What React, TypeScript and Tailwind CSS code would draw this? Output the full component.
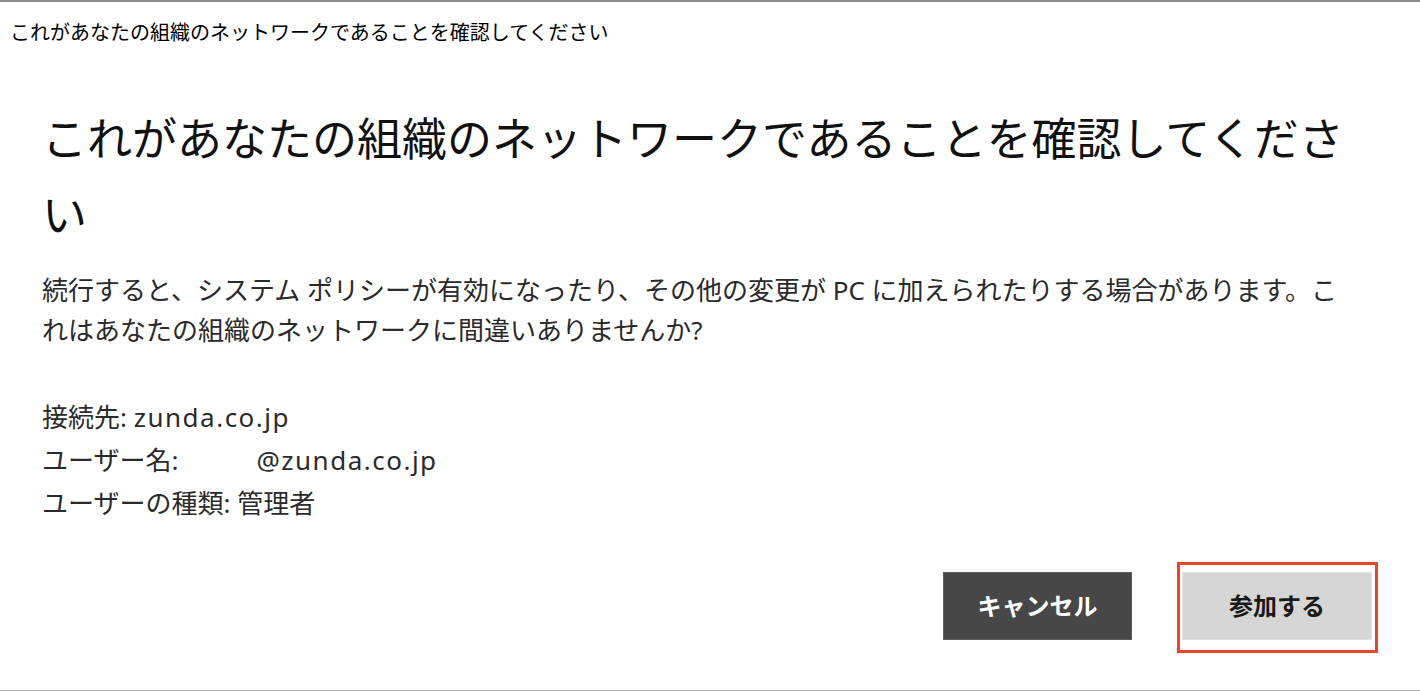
export default function App() {
  return (
    <div className="relative flex h-[691px] w-full flex-col overflow-hidden border-t-2 border-b border-t-[#8a8a8a] border-b-[#b4b4b4] bg-white font-['Noto_Sans','Noto_Sans_CJK_JP',sans-serif] text-[#1a1a1a]">
      <div className="pl-[10px] pt-[17px] text-[20px] leading-[28px] text-black">
        これがあなたの組織のネットワークであることを確認してください
      </div>

      <div className="px-[42px]">
        <h1 className="mt-[54px] text-[45px] font-normal leading-[76px] text-[#111]">
          これがあなたの組織のネットワークであることを確認してくださ
          <br />い
        </h1>

        <p className="mt-[17px] text-[26px] leading-[40px] text-[#2a2a2a]">
          続行すると、システム ポリシーが有効になったり、その他の変更が PC
          に加えられたりする場合があります。こ
          <br />
          れはあなたの組織のネットワークに間違いありませんか?
        </p>

        <div className="mt-[46px] text-[26px] leading-[43px] text-[#2a2a2a]">
          <div>
            接続先: <span className="tracking-[1.5px]">zunda.co.jp</span>
          </div>
          <div>
            ユーザー名:<span className="inline-block w-[78px]" />
            <span className="tracking-[1.5px]">@zunda.co.jp</span>
          </div>
          <div>ユーザーの種類: 管理者</div>
        </div>
      </div>

      <div className="mt-[47px] flex justify-end gap-[50px] pr-[48px]">
        <button className="flex h-[68px] w-[189px] items-center justify-center border border-[#5e5e5e] bg-[#474747] text-[24px] font-bold text-white">
          キャンセル
        </button>
        <div className="relative">
          <button className="flex h-[68px] w-[190px] items-center justify-center border border-[#e2e2e2] bg-[#d6d6d6] text-[24px] font-bold text-[#1a1a1a]">
            参加する
          </button>
          <div className="pointer-events-none absolute -top-[10px] -right-[6px] -bottom-[13px] -left-[5px] border-[3px] border-[#e8452f]" />
        </div>
      </div>
    </div>
  );
}
